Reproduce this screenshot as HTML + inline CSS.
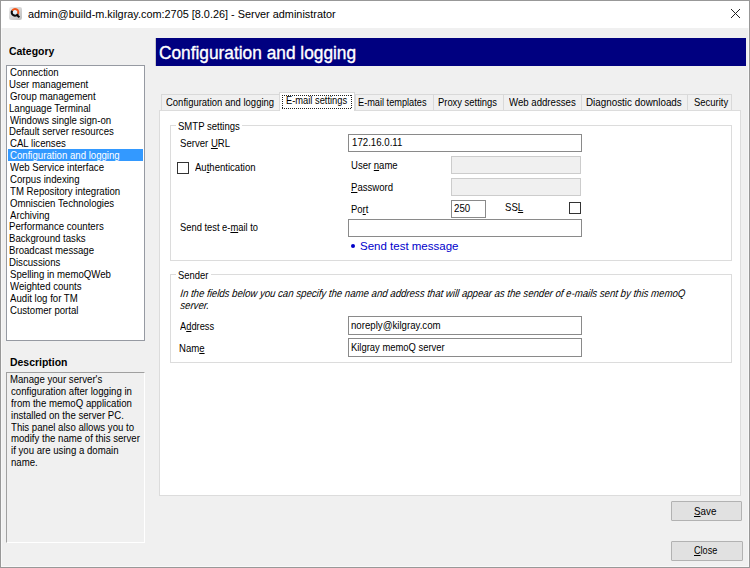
<!DOCTYPE html>
<html><head><meta charset="utf-8"><style>
html,body{margin:0;padding:0;}
body{width:750px;height:568px;overflow:hidden;position:relative;background:#f0f0f0;font-family:"Liberation Sans",sans-serif;}
.b{position:absolute;box-sizing:border-box;}
.t{position:absolute;white-space:pre;line-height:12px;transform-origin:0 0;}
.t u{text-decoration:underline;text-underline-offset:1px;}
.t i{font-style:italic;}
</style></head><body>
<!-- window frame -->
<div class="b" style="left:0;top:0;width:750px;height:568px;border:1px solid #989898;"></div>
<div class="b" style="left:1px;top:28px;width:748px;height:539px;border:1px solid #f8f8f8;border-top:none;"></div>
<div class="b" style="left:1px;top:1px;width:748px;height:27px;background:#fff;"></div>
<!-- icon -->
<svg class="b" style="left:9px;top:7px" width="13" height="13" viewBox="0 0 13 13">
  <defs><linearGradient id="ig" x1="0" y1="0" x2="1" y2="1"><stop offset="0" stop-color="#ececec"/><stop offset="1" stop-color="#bdbdbd"/></linearGradient></defs>
  <rect x="0" y="0" width="13" height="13" rx="2.2" fill="url(#ig)"/>
  <circle cx="6" cy="5.3" r="2.4" fill="#e4f2fa"/>
  <path d="M3.14 3.65 A3.3 3.3 0 0 1 8.86 6.95" stroke="#f0561c" stroke-width="2" fill="none"/>
  <path d="M8.86 6.95 A3.3 3.3 0 0 1 3.14 3.65" stroke="#0a0a0a" stroke-width="2.1" fill="none"/>
  <path d="M7.8 8 L10.4 10.3" stroke="#0a0a0a" stroke-width="2" fill="none"/>
</svg>
<!-- close X -->
<svg class="b" style="left:730px;top:8px" width="12" height="12" viewBox="0 0 12 12">
  <path d="M1 1 L10 10 M10 1 L1 10" stroke="#222" stroke-width="1" fill="none"/>
</svg>
<!-- listbox -->
<div class="b" style="left:6px;top:65px;width:139px;height:276px;border:1px solid #969aa2;background:#fff;"></div>
<div class="b" style="left:8px;top:149px;width:135px;height:12px;background:#3399ff;"></div>
<!-- description box -->
<div class="b" style="left:6px;top:372px;width:139px;height:171px;border-top:1px solid #a0a0a0;border-left:1px solid #a0a0a0;border-right:1px solid #fff;border-bottom:1px solid #fff;"></div>
<!-- header -->
<div class="b" style="left:155px;top:38px;width:1px;height:28px;background:#c8c8c8;"></div>
<div class="b" style="left:156px;top:38px;width:590px;height:28px;background:#000080;"></div>
<!-- tab panel -->
<div class="b" style="left:159px;top:110px;width:582px;height:386px;border:1px solid #dcdcdc;background:#fff;"></div>
<!-- tabs -->
<div class="b" style="left:161px;top:94px;width:118px;height:16px;border:1px solid #d9d9d9;border-bottom:none;border-right:none;background:#f0f0f0;"></div>
<div class="b" style="left:355px;top:94px;width:78px;height:16px;border:1px solid #d9d9d9;border-bottom:none;border-right:none;background:#f0f0f0;"></div>
<div class="b" style="left:433px;top:94px;width:70px;height:16px;border:1px solid #d9d9d9;border-bottom:none;border-right:none;background:#f0f0f0;"></div>
<div class="b" style="left:503px;top:94px;width:78px;height:16px;border:1px solid #d9d9d9;border-bottom:none;border-right:none;background:#f0f0f0;"></div>
<div class="b" style="left:581px;top:94px;width:106px;height:16px;border:1px solid #d9d9d9;border-bottom:none;border-right:none;background:#f0f0f0;"></div>
<div class="b" style="left:687px;top:94px;width:45px;height:16px;border:1px solid #d9d9d9;border-bottom:none;background:#f0f0f0;"></div>
<div class="b" style="left:279px;top:92px;width:76px;height:19px;border:1px solid #d9d9d9;border-bottom:none;background:#fff;"></div>
<div class="b" style="left:282px;top:95px;width:70px;height:1px;background:repeating-linear-gradient(90deg,#222 0 1px,transparent 1px 2px);"></div>
<div class="b" style="left:282px;top:108px;width:70px;height:1px;background:repeating-linear-gradient(90deg,#222 0 1px,transparent 1px 2px);"></div>
<div class="b" style="left:282px;top:95px;width:1px;height:14px;background:repeating-linear-gradient(180deg,#222 0 1px,transparent 1px 2px);"></div>
<div class="b" style="left:351px;top:95px;width:1px;height:14px;background:repeating-linear-gradient(180deg,#222 0 1px,transparent 1px 2px);"></div>
<!-- SMTP group -->
<div class="b" style="left:170px;top:125px;width:562px;height:136px;border:1px solid #dcdcdc;"></div>
<div class="b" style="left:176px;top:124px;width:66px;height:3px;background:#fff;"></div>
<!-- Sender group -->
<div class="b" style="left:170px;top:274px;width:562px;height:89px;border:1px solid #dcdcdc;"></div>
<div class="b" style="left:176px;top:273px;width:35px;height:3px;background:#fff;"></div>
<!-- textboxes -->
<div class="b" style="left:348px;top:134px;width:234px;height:18px;border:1px solid #8a8a8a;background:#fff;"></div>
<div class="b" style="left:451px;top:156px;width:130px;height:18px;border:1px solid #cccccc;background:#f0f0f0;"></div>
<div class="b" style="left:451px;top:178px;width:130px;height:18px;border:1px solid #cccccc;background:#f0f0f0;"></div>
<div class="b" style="left:451px;top:200px;width:35px;height:18px;border:1px solid #8a8a8a;background:#fff;"></div>
<div class="b" style="left:348px;top:219px;width:234px;height:18px;border:1px solid #8a8a8a;background:#fff;"></div>
<div class="b" style="left:348px;top:316px;width:234px;height:19px;border:1px solid #8a8a8a;background:#fff;"></div>
<div class="b" style="left:348px;top:338px;width:234px;height:19px;border:1px solid #8a8a8a;background:#fff;"></div>
<!-- checkboxes -->
<div class="b" style="left:177px;top:162px;width:12px;height:12px;border:1px solid #333;background:#fff;"></div>
<div class="b" style="left:569px;top:202px;width:12px;height:12px;border:1px solid #333;background:#fff;"></div>
<!-- bullet -->
<div class="b" style="left:351px;top:244px;width:4px;height:4px;border-radius:50%;background:#0000c8;"></div>
<!-- buttons -->
<div class="b" style="left:671px;top:501px;width:71px;height:20px;border:1px solid #b2b2b2;border-radius:1px;background:#e1e1e1;"></div>
<div class="b" style="left:671px;top:541px;width:72px;height:20px;border:1px solid #b2b2b2;border-radius:1px;background:#e1e1e1;"></div>

<div class="t" style="left:27.50px;top:8px;font:11px 'Liberation Sans';line-height:12px;color:#000;transform:scaleX(0.9887);">admin@build-m.kilgray.com:2705 [8.0.26] - Server administrator</div><div class="t" style="left:9.00px;top:45px;font:bold 11px 'Liberation Sans';line-height:12px;color:#000;transform:scaleX(0.9500);">Category</div><div class="t" style="left:10.00px;top:66px;font:11.5px 'Liberation Sans';line-height:12px;color:#000;transform:scaleX(0.8370);">Connection</div><div class="t" style="left:9.16px;top:78px;font:11.5px 'Liberation Sans';line-height:12px;color:#000;transform:scaleX(0.8370);">User management</div><div class="t" style="left:10.00px;top:90px;font:11.5px 'Liberation Sans';line-height:12px;color:#000;transform:scaleX(0.8370);">Group management</div><div class="t" style="left:9.16px;top:102px;font:11.5px 'Liberation Sans';line-height:12px;color:#000;transform:scaleX(0.8370);">Language Terminal</div><div class="t" style="left:10.00px;top:114px;font:11.5px 'Liberation Sans';line-height:12px;color:#000;transform:scaleX(0.8370);">Windows single sign-on</div><div class="t" style="left:9.16px;top:125px;font:11.5px 'Liberation Sans';line-height:12px;color:#000;transform:scaleX(0.8370);">Default server resources</div><div class="t" style="left:10.00px;top:137px;font:11.5px 'Liberation Sans';line-height:12px;color:#000;transform:scaleX(0.8370);">CAL licenses</div><div class="t" style="left:10.00px;top:149px;font:11.5px 'Liberation Sans';line-height:12px;color:#fff;transform:scaleX(0.8370);">Configuration and logging</div><div class="t" style="left:10.00px;top:161px;font:11.5px 'Liberation Sans';line-height:12px;color:#000;transform:scaleX(0.8370);">Web Service interface</div><div class="t" style="left:10.00px;top:173px;font:11.5px 'Liberation Sans';line-height:12px;color:#000;transform:scaleX(0.8370);">Corpus indexing</div><div class="t" style="left:10.00px;top:185px;font:11.5px 'Liberation Sans';line-height:12px;color:#000;transform:scaleX(0.8370);">TM Repository integration</div><div class="t" style="left:10.00px;top:197px;font:11.5px 'Liberation Sans';line-height:12px;color:#000;transform:scaleX(0.8370);">Omniscien Technologies</div><div class="t" style="left:10.00px;top:209px;font:11.5px 'Liberation Sans';line-height:12px;color:#000;transform:scaleX(0.8370);">Archiving</div><div class="t" style="left:9.16px;top:220px;font:11.5px 'Liberation Sans';line-height:12px;color:#000;transform:scaleX(0.8370);">Performance counters</div><div class="t" style="left:9.16px;top:232px;font:11.5px 'Liberation Sans';line-height:12px;color:#000;transform:scaleX(0.8370);">Background tasks</div><div class="t" style="left:9.16px;top:244px;font:11.5px 'Liberation Sans';line-height:12px;color:#000;transform:scaleX(0.8370);">Broadcast message</div><div class="t" style="left:9.16px;top:256px;font:11.5px 'Liberation Sans';line-height:12px;color:#000;transform:scaleX(0.8370);">Discussions</div><div class="t" style="left:10.00px;top:268px;font:11.5px 'Liberation Sans';line-height:12px;color:#000;transform:scaleX(0.8370);">Spelling in memoQWeb</div><div class="t" style="left:10.00px;top:280px;font:11.5px 'Liberation Sans';line-height:12px;color:#000;transform:scaleX(0.8370);">Weighted counts</div><div class="t" style="left:10.00px;top:292px;font:11.5px 'Liberation Sans';line-height:12px;color:#000;transform:scaleX(0.8370);">Audit log for TM</div><div class="t" style="left:10.00px;top:304px;font:11.5px 'Liberation Sans';line-height:12px;color:#000;transform:scaleX(0.8370);">Customer portal</div><div class="t" style="left:10.00px;top:356px;font:bold 11px 'Liberation Sans';line-height:12px;color:#000;transform:scaleX(0.9500);">Description</div><div class="t" style="left:9.91px;top:373px;font:11.5px 'Liberation Sans';line-height:12px;color:#000;transform:scaleX(0.8370);">Manage your server's</div><div class="t" style="left:10.75px;top:385px;font:11.5px 'Liberation Sans';line-height:12px;color:#000;transform:scaleX(0.8370);">configuration after logging in</div><div class="t" style="left:10.75px;top:397px;font:11.5px 'Liberation Sans';line-height:12px;color:#000;transform:scaleX(0.8370);">from the memoQ application</div><div class="t" style="left:10.75px;top:409px;font:11.5px 'Liberation Sans';line-height:12px;color:#000;transform:scaleX(0.8370);">installed on the server PC.</div><div class="t" style="left:10.75px;top:421px;font:11.5px 'Liberation Sans';line-height:12px;color:#000;transform:scaleX(0.8370);">This panel also allows you to</div><div class="t" style="left:10.75px;top:432px;font:11.5px 'Liberation Sans';line-height:12px;color:#000;transform:scaleX(0.8370);">modify the name of this server</div><div class="t" style="left:10.75px;top:444px;font:11.5px 'Liberation Sans';line-height:12px;color:#000;transform:scaleX(0.8370);">if you are using a domain</div><div class="t" style="left:10.75px;top:456px;font:11.5px 'Liberation Sans';line-height:12px;color:#000;transform:scaleX(0.8370);">name.</div><div class="t" style="left:159.44px;top:47px;font:18px 'Liberation Sans';line-height:12px;color:#fff;transform:scaleX(0.9606);-webkit-text-stroke:0.35px #fff;">Configuration and logging</div><div class="t" style="left:166.00px;top:96px;font:11.5px 'Liberation Sans';line-height:12px;color:#000;transform:scaleX(0.8244);">Configuration and logging</div><div class="t" style="left:286.49px;top:94px;font:11.5px 'Liberation Sans';line-height:12px;color:#000;transform:scaleX(0.8108);">E-mail settings</div><div class="t" style="left:358.20px;top:96px;font:11.5px 'Liberation Sans';line-height:12px;color:#000;transform:scaleX(0.8000);">E-mail templates</div><div class="t" style="left:438.18px;top:96px;font:11.5px 'Liberation Sans';line-height:12px;color:#000;transform:scaleX(0.8169);">Proxy settings</div><div class="t" style="left:509.00px;top:96px;font:11.5px 'Liberation Sans';line-height:12px;color:#000;transform:scaleX(0.8375);">Web addresses</div><div class="t" style="left:586.14px;top:96px;font:11.5px 'Liberation Sans';line-height:12px;color:#000;transform:scaleX(0.8559);">Diagnostic downloads</div><div class="t" style="left:693.50px;top:96px;font:11.5px 'Liberation Sans';line-height:12px;color:#000;transform:scaleX(0.8214);">Security</div><div class="t" style="left:178.30px;top:120px;font:11.5px 'Liberation Sans';line-height:12px;color:#000;transform:scaleX(0.8297);">SMTP settings</div><div class="t" style="left:180.00px;top:137px;font:11.5px 'Liberation Sans';line-height:12px;color:#000;transform:scaleX(0.8333);">Server <u>U</u>RL</div><div class="t" style="left:194.80px;top:161px;font:11.5px 'Liberation Sans';line-height:12px;color:#000;transform:scaleX(0.8301);">Au<u>t</u>hentication</div><div class="t" style="left:350.57px;top:159px;font:11.5px 'Liberation Sans';line-height:12px;color:#000;transform:scaleX(0.8291);">User <u>n</u>ame</div><div class="t" style="left:350.57px;top:181px;font:11.5px 'Liberation Sans';line-height:12px;color:#000;transform:scaleX(0.8327);"><u>P</u>assword</div><div class="t" style="left:350.57px;top:203px;font:11.5px 'Liberation Sans';line-height:12px;color:#000;transform:scaleX(0.8250);">Po<u>r</u>t</div><div class="t" style="left:505.40px;top:201px;font:11.5px 'Liberation Sans';line-height:12px;color:#000;transform:scaleX(0.8364);">SS<u>L</u></div><div class="t" style="left:351.66px;top:136px;font:11.5px 'Liberation Sans';line-height:12px;color:#000;transform:scaleX(0.8407);">172.16.0.11</div><div class="t" style="left:453.50px;top:202px;font:11.5px 'Liberation Sans';line-height:12px;color:#000;transform:scaleX(0.8421);">250</div><div class="t" style="left:180.00px;top:221px;font:11.5px 'Liberation Sans';line-height:12px;color:#000;transform:scaleX(0.8125);">Send test e-<u>m</u>ail to</div><div class="t" style="left:360.00px;top:240px;font:11.5px 'Liberation Sans';line-height:12px;color:#0000cc;transform:scaleX(1.0000);">Send test message</div><div class="t" style="left:178.40px;top:269px;font:11.5px 'Liberation Sans';line-height:12px;color:#000;transform:scaleX(0.8189);">Sender</div><div class="t" style="left:180.00px;top:287px;font:italic 11px 'Liberation Sans';line-height:12px;color:#000;transform:scaleX(0.8737);transform-origin:0 10px;transform:scaleX(0.874) skewX(-7deg);"><i>In the fields below you can specify the name and address that will appear as the sender of e-mails sent by this memoQ</i></div><div class="t" style="left:180.00px;top:299px;font:italic 11px 'Liberation Sans';line-height:12px;color:#000;transform:scaleX(0.8737);transform-origin:0 10px;transform:scaleX(0.874) skewX(-7deg);"><i>server.</i></div><div class="t" style="left:179.80px;top:320px;font:11.5px 'Liberation Sans';line-height:12px;color:#000;transform:scaleX(0.8095);">A<u>d</u>dress</div><div class="t" style="left:179.17px;top:342px;font:11.5px 'Liberation Sans';line-height:12px;color:#000;transform:scaleX(0.8333);">Nam<u>e</u></div><div class="t" style="left:351.00px;top:319px;font:11.5px 'Liberation Sans';line-height:12px;color:#000;transform:scaleX(0.8396);">noreply@kilgray.com</div><div class="t" style="left:350.68px;top:341px;font:11.5px 'Liberation Sans';line-height:12px;color:#000;transform:scaleX(0.8186);">Kilgray memoQ server</div><div class="t" style="left:694.20px;top:505px;font:11.5px 'Liberation Sans';line-height:12px;color:#000;transform:scaleX(0.8538);"><u>S</u>ave</div><div class="t" style="left:693.90px;top:544px;font:11.5px 'Liberation Sans';line-height:12px;color:#000;transform:scaleX(0.7931);"><u>C</u>lose</div>
</body></html>
